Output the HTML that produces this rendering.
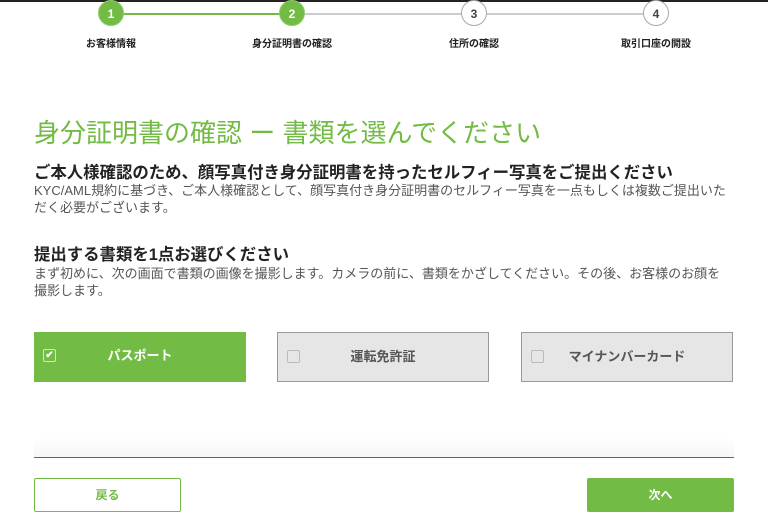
<!DOCTYPE html><html><head><meta charset="utf-8"><style>
body{margin:0;width:768px;height:527px;overflow:hidden;background:#fff;font-family:"Liberation Sans","Noto Sans CJK JP",sans-serif;position:relative}
.a{position:absolute}
.c{position:absolute;width:26px;height:26px;border-radius:50%;top:0;font-size:12px;font-weight:bold;text-align:center;line-height:26px;box-sizing:border-box}
.g{background:#72bb44;color:#fff;border:1px solid #8fcd68}
.w{background:#fff;color:#444;border:1px solid #aaa}
.l{position:absolute;top:35px;font-size:10px;font-weight:bold;color:#222;width:140px;text-align:center}
.box{position:absolute;top:332px;width:212px;height:50px;box-sizing:border-box;font-size:13px;font-weight:bold;line-height:48px;text-align:center}
.cb{position:absolute;left:9px;top:17px;width:13px;height:13px;border:1px solid #bbb;border-radius:2px;box-sizing:border-box}
</style></head><body>
<div class="a" style="left:0;top:0;width:768px;height:2px;background:#222"></div>
<div class="a" style="left:111px;top:13px;width:181px;height:2px;background:#72bb44"></div>
<div class="a" style="left:292px;top:13px;width:364px;height:2px;background:#ccc"></div>
<div class="c g" style="left:98px">1</div>
<div class="c g" style="left:279px">2</div>
<div class="c w" style="left:461px">3</div>
<div class="c w" style="left:643px">4</div>
<div class="l" style="left:41px">お客様情報</div>
<div class="l" style="left:222px">身分証明書の確認</div>
<div class="l" style="left:404px">住所の確認</div>
<div class="l" style="left:586px">取引口座の開設</div>
<div class="a" style="left:34px;top:113px;font-size:26px;color:#72bb44;white-space:nowrap">身分証明書の確認 ー 書類を選んでください</div>
<div class="a" style="left:34px;top:159px;font-size:16.4px;font-weight:bold;color:#222;white-space:nowrap">ご本人様確認のため、顔写真付き身分証明書を持ったセルフィー写真をご提出ください</div>
<div class="a" style="left:34px;top:182px;width:700px;font-size:13px;line-height:17px;color:#555">KYC/AML規約に基づき、ご本人様確認として、顔写真付き身分証明書のセルフィー写真を一点もしくは複数ご提出いただく必要がございます。</div>
<div class="a" style="left:34px;top:241px;font-size:16.4px;font-weight:bold;color:#222">提出する書類を1点お選びください</div>
<div class="a" style="left:34px;top:265px;width:690px;font-size:13px;line-height:17px;color:#555">まず初めに、次の画面で書類の画像を撮影します。カメラの前に、書類をかざしてください。その後、お客様のお顔を撮影します。</div>
<div class="box" style="left:34px;background:#72bb44;color:#fff"><div class="cb" style="border-color:#ddd;color:#fff;font-size:10px;line-height:11px">✔</div>パスポート</div>
<div class="box" style="left:277px;background:#e6e6e6;border:1px solid #999;color:#555"><div class="cb"></div>運転免許証</div>
<div class="box" style="left:521px;background:#e6e6e6;border:1px solid #999;color:#555"><div class="cb"></div>マイナンバーカード</div>
<div class="a" style="left:34px;top:437px;width:700px;height:20px;background:linear-gradient(#fff,#f6f6f6)"></div>
<div class="a" style="left:34px;top:457px;width:700px;height:1px;background:#666"></div>
<div class="a" style="left:34px;top:478px;width:147px;height:34px;box-sizing:border-box;border:1px solid #72bb44;border-radius:2px;color:#72bb44;font-size:12px;font-weight:bold;text-align:center;line-height:32px">戻る</div>
<div class="a" style="left:587px;top:478px;width:147px;height:34px;background:#72bb44;border-radius:2px;color:#fff;font-size:12px;font-weight:bold;text-align:center;line-height:34px">次へ</div>
</body></html>
